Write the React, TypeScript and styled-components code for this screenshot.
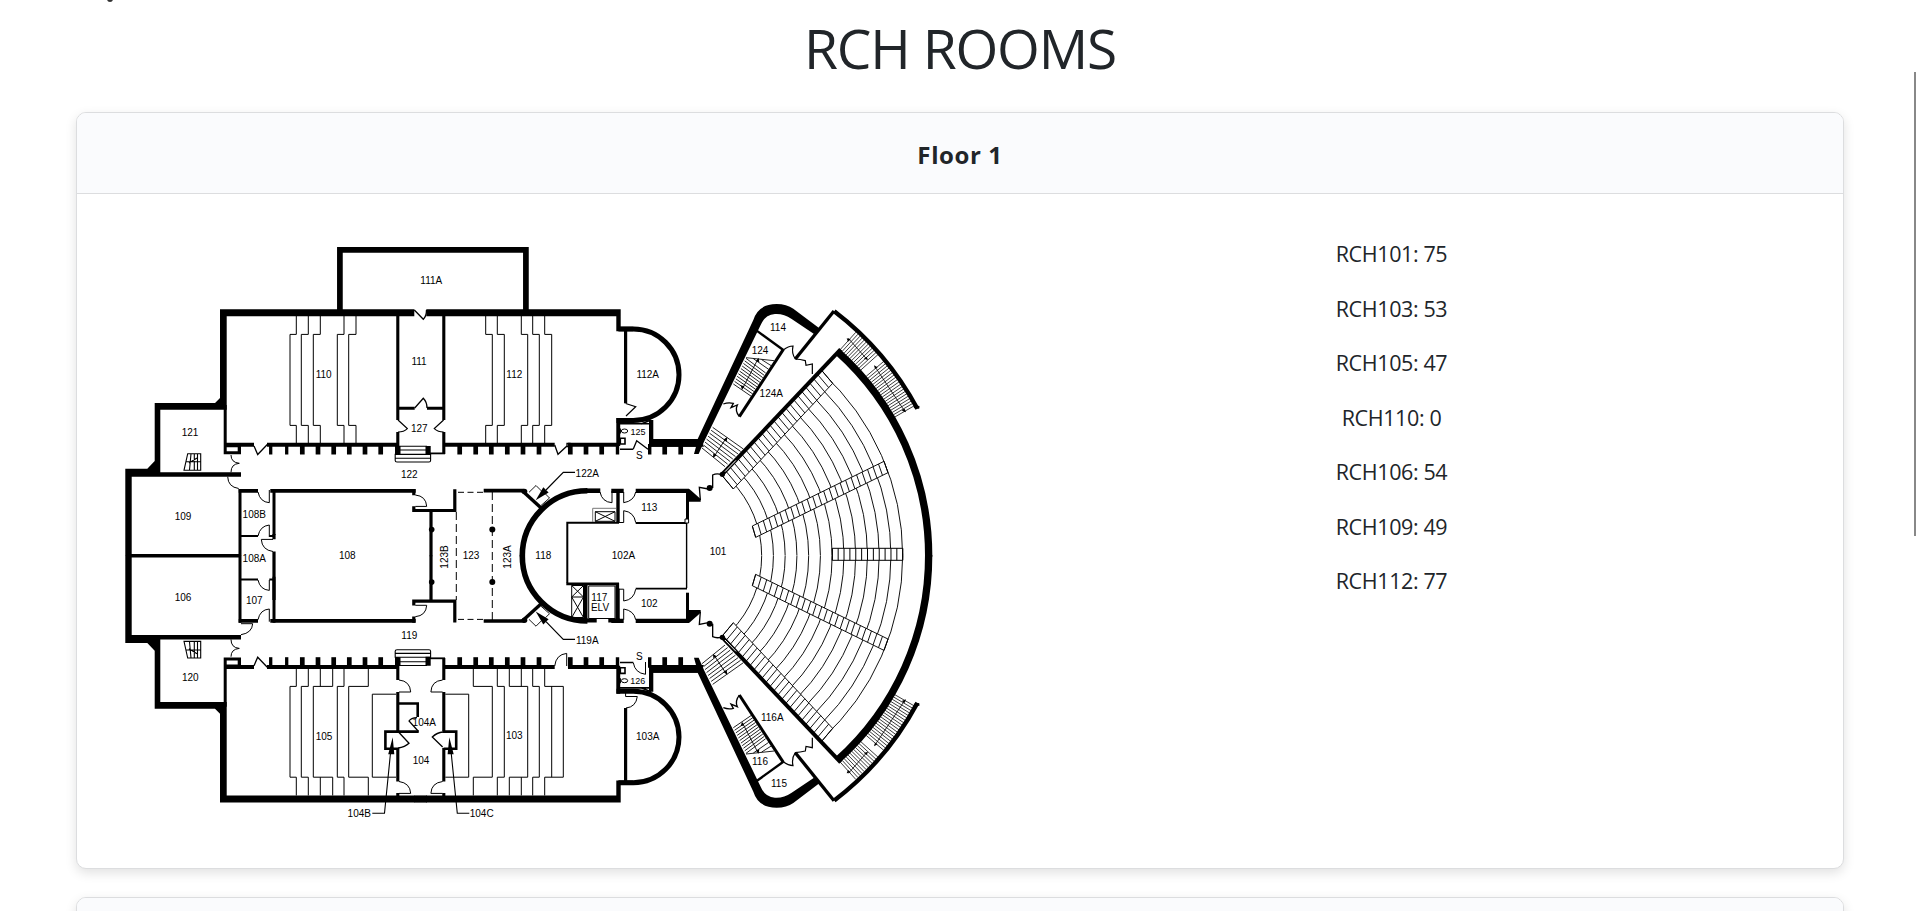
import React from 'react';
import styled, { createGlobalStyle } from 'styled-components';

const GlobalStyle = createGlobalStyle`
    body {
        margin: 0;
        height: 911px;
        overflow: hidden;
        background: #fff;
        color: #212529;
        font-family: 'Segoe UI', 'Open Sans', 'Noto Sans', sans-serif;
    }
`;

// Styling components
const Page = styled.div`
    position: relative;
    height: 911px;
    overflow: hidden;
    padding: 0 75px 0 76px;
    box-sizing: border-box;
`;

const NavRemnant = styled.span`
    position: absolute;
    left: 107px;
    top: -4px;
    width: 6px;
    height: 6px;
    border-radius: 50%;
    background: #333;
`;

const ScrollThumb = styled.div`
    position: absolute;
    left: 1914px;
    top: 72px;
    width: 2px;
    height: 464px;
    background: #888;
`;

const Title = styled.h1`
    margin: 0;
    height: 112px;
    line-height: 96px;
    font-size: 55px;
    font-weight: 400;
    letter-spacing: -1.2px;
    text-align: center;
`;

const Card = styled.section`
    box-sizing: border-box;
    height: 757px;
    margin-bottom: 28px;
    border: 1px solid #dcdddf;
    border-radius: 10px;
    overflow: hidden;
    background: #fff;
    box-shadow: 0 4px 12px rgba(0, 0, 0, 0.12);
`;

const CardHeader = styled.header`
    box-sizing: border-box;
    height: 81px;
    border-bottom: 1px solid #dcdddf;
    background: #fafbfd;
    line-height: 83px;
    font-size: 24px;
    font-weight: 700;
    letter-spacing: 0.6px;
    text-align: center;
`;

const CardBody = styled.div`
    display: grid;
    grid-template-columns: 859px 859px;
    padding-left: 26px;
`;

const FloorPlan = styled.svg`
    display: block;
    width: 859px;
    height: 674px;
`;

const RoomList = styled.ul`
    margin: 0;
    padding: 33px 0 0;
    list-style: none;
    text-align: center;
`;

const Room = styled.li`
    line-height: 54.5px;
    font-size: 21.5px;
    letter-spacing: -0.38px;
`;

const rooms = [
    { name: 'RCH101', seats: 75 },
    { name: 'RCH103', seats: 53 },
    { name: 'RCH105', seats: 47 },
    { name: 'RCH110', seats: 0 },
    { name: 'RCH106', seats: 54 },
    { name: 'RCH109', seats: 49 },
    { name: 'RCH112', seats: 77 },
];

const labels: [string, number, number][] = [
    ['111A', 431.3, 280.3], ['110', 323.7, 375], ['111', 419, 361.3], ['112', 514.3, 375],
    ['112A', 647.7, 375], ['127', 419.3, 428.3], ['121', 190, 432.3], ['122', 409.3, 474.3],
    ['109', 183, 516.7], ['108B', 254.3, 514.3], ['113', 649.3, 507.3], ['114', 778, 328],
    ['124', 760, 350.3], ['124A', 771.3, 393.3], ['102A', 623.5, 556], ['101', 718, 552],
    ['108A', 254.3, 559], ['106', 183, 597.7], ['107', 254.3, 600.7], ['108', 347.3, 555.7],
    ['119', 409.3, 635.7], ['120', 190.3, 678], ['105', 324, 736.3], ['104A', 424.3, 722.7],
    ['104', 421, 760.3], ['104B', 359.3, 813.3], ['123', 471, 555.7], ['118', 543.3, 555.7],
    ['117', 599.3, 597.3], ['ELV', 600, 607.6], ['102', 649.3, 604], ['119A', 587.3, 640.3],
    ['122A', 587.3, 473.3], ['103', 514.3, 736], ['103A', 647.7, 737], ['104C', 481.7, 813.3],
    ['116A', 772.3, 717.7], ['116', 760, 761.3], ['115', 779, 783.3], ['S', 639.3, 455.7],
    ['S', 639.3, 656.3],
];

const range = (n: number) => Array.from({ length: n }, (_, i) => i);

// Tiered rows: a is the x at the ends, b is the x in the middle
const tiers = (pairs: number[][], y: number[]) =>
    pairs.map(([a, b]) => `M${a} ${y[0]}V${y[1]}H${b}V${y[2]}H${a}V${y[3]}`).join('');

// Rungs between two edges, interpolated from the start pair to the end pair
const rungs = (n: number, a: number[], b: number[], c: number[], d: number[]) =>
    range(n + 1).map((i) => {
        const t = i / n;
        const mix = (p: number, q: number) => (p + (q - p) * t).toFixed(2);
        return `M${mix(a[0], c[0])} ${mix(a[1], c[1])}L${mix(b[0], d[0])} ${mix(b[1], d[1])}`;
    }).join('');

// Outline around a run of rungs
const strip = (a: number[], b: number[], c: number[], d: number[]) => `M${a}L${b}L${d}L${c}Z`;

// Auditorium is drawn around this centre
const CX = 134;
const CY = 797;
const polar = (r: number, deg: number) => {
    const rad = (deg * Math.PI) / 180;
    return `${(CX + r * Math.cos(rad)).toFixed(2)} ${(CY - r * Math.sin(rad)).toFixed(2)}`;
};

const radial = (n: number, from: number, to: number) =>
    range(n).map((i) => {
        const deg = from + ((to - from) * i) / (n - 1);
        return `M${polar(832, deg)}L${polar(902, deg)}`;
    }).join('');

const wallTicks = [
    [270.7, 3.3], [286.7, 3.3], [302.3, 4.7], [318, 4.7], [333.7, 4.7], [349.3, 4.7], [365, 4.7], [380.7, 4.7],
    [459.7, 4.7], [475.7, 4.7], [491.3, 4.7], [507.3, 4.7], [523, 4.7], [539, 4.7], [570.3, 4.7], [586, 4.7],
    [601.7, 4.7], [664.7, 4.7], [680.7, 4.7],
];

// The half of the building that repeats on both sides of the centre line
const MainHalf: React.FC = () => (
    <>
        {/* outer walls */}
        <path d="M220 309.3H414.3V316.3H226.7V409.7H160.3V472.3H241V476.7H131.7V556H125.3V468.7H147.3L154.7 461V403H215L220 398Z" fill="#000" stroke="none" />
        <path d="M426.3 309.3H620.7V326.7H633.3V331.3H616.3V316.3H426.3Z" fill="#000" stroke="none" />
        <path d="M223.7 405H226.7V442.7H254V446.7H241V454.3H223.7ZM226.7 447.2V451.2H237.7V447.2Z" fill="#000" fillRule="evenodd" stroke="none" />
        <path d="M267 444.7H399M445 444.7H554.7M568 444.7H618" strokeWidth="4" />
        {wallTicks.map(([x, w]) => <path key={x} d={`M${x} 444V454.5`} strokeWidth={w} />)}
        <path d="M397 444V454.5M617.5 444V454.5M649.7 444V454.5" strokeWidth="3.4" />
        <path d="M254 446L257.7 454.5L267.3 444.5" strokeWidth="1.3" />
        <path d="M231 455Q231 462.5 239.3 463.3Q231 464 231 472.3" />
        {/* small stairs */}
        <path d="M187.7 453.7H200.7V470.3H184ZM191 453.7L189.5 470M194.3 453.7V470M197.5 453.7V470M186 461.7H200.7M189 463L197 458" strokeWidth="1.1" />
        {/* entrance steps */}
        <path d="M395 446H400.5V454.5H395ZM425.5 446H430.7V455H425.5Z" fill="#000" stroke="none" />
        <path d="M399 446.2H427M399 450H427M395.2 454.4H430.6V460.5Q430.6 462 429 462H397Q395.2 462 395.2 460.5ZM395.2 458.3H430.6" strokeWidth="1.1" />
        <path d="M430 453.4H445" strokeWidth="1.8" />
        {/* half round room */}
        <path d="M618.4 329H633.3A45.7 45.7 0 0 1 633.3 420.4H616.5" strokeWidth="5" />
        <path d="M616.3 418H620.2V446H616.3ZM649 420H653.3V439H700L704 446.7H649Z" fill="#000" stroke="none" />
        <path d="M620 423.8H650M620 449.2H633.3M651 420L641 424" strokeWidth="1.6" />
        <path d="M620.3 438.3H625V444H620.3Z" strokeWidth="1.6" />
        <ellipse cx="624.5" cy="431" rx="3.2" ry="2" />
        <path d="M620.3 428.5V433.5" strokeWidth="1.3" />
        {/* centre block */}
        <path d="M238.7 490.8H258M270.3 490.8H415.7M483.7 490.7H524" strokeWidth="3.7" />
        <path d="M240 489V556M274 489V535" strokeWidth="3" />
        <path d="M258 492Q260 502 269.3 502.7V490" />
        <path d="M413.8 489V495.3M413.8 506.3V510.5H454.8V489.3" strokeWidth="3.2" />
        <path d="M415.3 495Q426 496 426.7 506.4H415.3" />
        <path d="M431 510V556.2" strokeWidth="3.2" />
        <circle cx="431.7" cy="529.6" r="2.8" fill="#000" stroke="none" />
        <circle cx="492.3" cy="529.6" r="3" fill="#000" stroke="none" />
        <path d="M458 492.3H483" strokeDasharray="6 3.5" />
        <path d="M522 490.5L542 508.8" strokeWidth="3.4" />
        <circle cx="524.5" cy="491.5" r="2.8" fill="#000" stroke="none" />
        <path d="M587.4 490.7A65.1 65.1 0 0 0 522.3 556.2" strokeWidth="5.6" />
        <path d="M529 492.3L536 485.5L541.5 491M549.5 498L541 505.5M549.5 498L545.5 494" strokeWidth="0.9" />
        <path d="M575 472.4H563.3L546 490" strokeWidth="1.2" />
        <path d="M535.7 500.3L543.3 487.3L548.6 492.4Z" fill="#000" stroke="none" />
        <path d="M611.3 490.8H623.7M635.7 490.8H689" strokeWidth="4.3" />
        <path d="M618 490V523" strokeWidth="3.4" />
        <path d="M623.7 492V502.7Q634 501 635.7 492M619 522.5H623.7V510.7Q634 512 635.7 522.5" />
        <path d="M635.7 523H687" strokeWidth="1.8" />
        <path d="M687.5 490V519" strokeWidth="3" />
    </>
);

// Theatre wing
const WingHalf: React.FC = () => (
    <g transform="translate(610 290) scale(0.33333)" strokeWidth="2.8">
        {range(13).map((i) => {
            const r = 321 + i * 35.25;
            return <path key={i} d={`M${polar(r, i === 12 ? 47.6 : 44.5)}A${r} ${r} 0 0 1 ${polar(r, 0)}`} />;
        })}
        <path d={strip([335, 555], [370, 597], [634, 240], [668, 280])} fill="#fff" />
        <path d={rungs(25, [335, 555], [370, 597], [634, 240], [668, 280])} />
        <path d={strip([427, 708], [437, 742], [822, 514], [834, 548])} fill="#fff" />
        <path d={rungs(24, [427, 708], [437, 742], [822, 514], [834, 548])} />
        {/* main curved walls */}
        <path d={`M${polar(822, 48.2)}A822 822 0 0 1 ${polar(822, -0.2)}`} strokeWidth="22" />
        <path d={`M${polar(910, 53.7)}A906 906 0 0 1 ${polar(903, 29.2)}`} strokeWidth="13" />
        <path d="M912 350L928 352" strokeWidth="8" />
        <path d="M335 555L692 178" strokeWidth="12" />
        <path d="M345 545L378 511" stroke="#fff" strokeWidth="3" />
        <path d="M556 207L672 63" strokeWidth="10" />
        <path d={radial(12, 48, 42)} strokeWidth="2.3" />
        <path d={radial(20, 40.3, 30)} strokeWidth="2.3" />
        <path d="M715 145L770 207M795 230L885 365" strokeWidth="2.4" />
        <path d="M710 145L722 148L714 155ZM774 210L762 206L770 200ZM792 226L803 232L795 237ZM888 367L875 362L884 356Z" fill="#000" stroke="none" />
        {/* rounded corner and diagonal wall */}
        <path d="M120 447H263L430 90Q445 42 500 42Q530 42 550 56L628 115L612 132L545 87Q520 70 495 72Q465 74 452 105L282 455L266 492H252L258 470H120Z" fill="#000" stroke="none" />
        <path d="M440 122L520 180" strokeWidth="7" />
        <path d="M520 178L388 380" strokeWidth="9" />
        <path d={rungs(10, [408, 205], [467, 249], [370, 282], [424, 319])} strokeWidth="2.6" />
        <path d="M408 203L492 212M430 206L476 238M455 209L485 228M398 295L445 205" strokeWidth="2.6" />
        <path d="M396 300L392 286L403 289ZM446 205L448 217L438 213Z" fill="#000" stroke="none" />
        <path d="M340 342Q355 336 370 340L363 353L382 345Q374 362 388 380" strokeWidth="4" />
        <path d="M520 180Q535 168 549 168Q544 190 556 207Q570 208 586 212L588 226L607 222V252" strokeWidth="3.6" />
        <path d={rungs(7, [308, 412], [400, 477], [276, 474], [345, 530])} strokeWidth="2.6" />
        <path d="M348 445L312 500" />
        <path d="M352 441L350 455L340 449ZM309 503L310 490L320 496Z" fill="#000" stroke="none" />
        {/* lobby doors */}
        <path d="M230 597H238L272 627V635H228Z" fill="#000" stroke="none" />
        <path d="M271 630L268 592L295 597M308 594V555Q320 549 335 554" strokeWidth="4" />
        <circle cx="299" cy="594" r="9" fill="#000" stroke="none" />
        <circle cx="337" cy="553" r="8" fill="#000" stroke="none" />
    </g>
);

const FloorOnePlan: React.FC = () => (
    <FloorPlan viewBox="103 194 859 674" fill="none" stroke="#000" strokeWidth="1">
        <MainHalf />
        <WingHalf />
        <g transform="matrix(1 0 0 -1 0 1111.7)">
            <MainHalf />
            <WingHalf />
        </g>

        {/* north side */}
        <path d="M339.9 312V249.8H525.9V312" strokeWidth="5.7" />
        <path d="M414.3 310L423.3 319.3Q426.5 316 426.5 310M414.7 408L423.3 398.3Q427 402 427 408" strokeWidth="1.3" />
        <path d="M399 408.2H414.7M427 408.2H443" strokeWidth="3" />
        <path d="M397.8 316V420M397.8 432V454M443.8 316V420M443.8 432V454" strokeWidth="3.1" />
        <path d="M398 420L407.3 428.6Q404 432 398 432M443.6 420L434.3 428.6Q438 432 443.6 432" strokeWidth="1.2" />
        <path d={tiers([[296.3, 290], [308.3, 301.3], [320.3, 313.3], [344, 337.3], [356, 348.7], [485.7, 492.3], [497.3, 504.3], [521.3, 527.7], [532.7, 539.3], [544.7, 551.7]], [316, 334.4, 425.4, 443])} />
        <path d="M554.7 445L558 454.3L567.5 445.5M567 443.5H570V446.5H567Z" strokeWidth="1.3" />
        <path d="M625.6 331V403.3" strokeWidth="3.2" />
        <path d="M625.7 403.5L635.7 406.7L626 416" strokeWidth="1.2" />
        <path d="M633.3 449L636.7 440.7L648 449.3" strokeWidth="1.3" />
        <path d="M227.7 476.7Q228 487 238.7 488.5" />
        <path d="M587 490.7H600.3" strokeWidth="4.6" />
        <path d="M600 492Q602 502 612 502.7V491" />
        <path d="M567.3 583V522.8H619" strokeWidth="2" />
        <path d="M592.7 522V508.3H616" stroke="#777" />
        <path d="M595.3 511.7H615V521.3H595.3ZM595.3 511.7L615 521.3M615 511.7L595.3 521.3" />

        {/* centre */}
        <path d="M131 555.8H240" strokeWidth="3.6" />
        <path d="M241 536H258M269.3 536H275M241 579.6H258M269.3 579.6H275" strokeWidth="2" />
        <path d="M274 534V539.3M274 551.5V600" strokeWidth="3.2" />
        <path d="M258 536Q260 526 269.3 525V537M273 539.4H261.3Q262 550 273 551.5M258 580Q260 589.6 269.3 590.4V580" />
        <path d="M456.3 512V600M492.3 492V620" strokeDasharray="8 4" />
        <path d="M686.6 523V588" strokeWidth="1.4" />
        <path d="M685 519H688.6V523H685Z" fill="#fff" />
        <path d="M832.3 548.3H902.7V560.3H832.3Z" fill="#fff" />
        <path d={rungs(12, [832.3, 548.3], [832.3, 560.3], [902.7, 548.3], [902.7, 560.3])} />

        {/* south side */}
        <path d="M414 799H427" strokeWidth="7.2" />
        <path d="M566.3 583.8H619" strokeWidth="2.8" />
        <path d="M585.7 583V621M617.3 583V621" strokeWidth="3.6" />
        <path d="M588.7 586H615V618.5H588.7Z" />
        <path d="M571.7 585.5H583.5V617.5H571.7ZM571.7 597H583.5M571.7 585.5L583.5 597L571.7 617.5M583.5 585.5L571.7 597L583.5 617.5" />
        <path d="M584 620.5H596.7M608.3 620.5H620" strokeWidth="4.2" />
        <path d="M252.7 623.7H241M252.7 623.7Q252 633 241 634.7" />
        <path d="M554.7 666Q556 654.5 566.7 653.4V666" />
        <path d="M633.3 662.7Q635 673 645.5 674.3V662" />
        <path d="M625.6 708V781" strokeWidth="3.2" />
        <path d="M625.6 693V696.5H637.3Q636 707 626 708" />
        <path d={tiers([[296.3, 290], [308.3, 301.3], [332.7, 313.3], [344, 337.3], [368.3, 348.7], [473.3, 492.3], [497.3, 504.3], [509.3, 527.7], [532.7, 539.3], [544.7, 563.3]], [669, 686.4, 777.2, 795.5])} />
        <path d="M320.3 669V686.4M320.3 777.2V795.5M521.3 669V686.4M521.3 777.2V795.5M551.7 686.4V777.2M396 694.2H372.3V777.2H396M445.3 694.2H468.7V777.2H445.3" />
        <path d="M397.8 658V680M397.8 692V731M397.8 748V781.5M397.8 793V796M443.8 658V680M443.8 692V731M443.8 748V781.5M443.8 793V796" strokeWidth="3.1" />
        <path d="M399 680Q410 681 410.7 692H399M442.6 680Q431.3 681 430.9 692H442.6M399 781.5Q410 783 410.7 793.4H399M442.6 781.5Q431.3 783 430.9 793.4H442.6" />
        <path d="M399 731.6H385.4V748.8H398M442.6 731.6H456.2V748.8H443.6M399 703.5H417.7V717M399 731.6H418.7" strokeWidth="2.6" />
        <path d="M399 732.5L409 743.3Q405 747 398 748M442.6 747L432.3 737Q437 732.5 443 732M417 717.7Q411 718 409 721L418.5 731.5" strokeWidth="1.3" />
        <path d="M372.3 813.3H384.5L390.5 753M469.3 813.3H457.3L451.2 753" strokeWidth="1.1" />
        <path d="M392.7 737.3L388.2 754.3H394.3ZM449.3 737.3L447.6 754.3H453.7Z" fill="#000" stroke="none" />

        <g fill="#000" stroke="none" fontFamily="'Liberation Sans', sans-serif" fontSize="10" textAnchor="middle">
            {labels.map(([text, x, y], index) => (
                <text key={index} x={x} y={y + 3.4}>{text}</text>
            ))}
            <text x="638" y="435.3" fontSize="9">125</text>
            <text x="637.7" y="683.6" fontSize="9">126</text>
            <text transform="translate(447.9 557) rotate(-90)">123B</text>
            <text transform="translate(510.9 557) rotate(-90)">123A</text>
        </g>
    </FloorPlan>
);

const App: React.FC = () => {
    return (
        <>
            <GlobalStyle />
            <Page>
                <NavRemnant />
                <Title>RCH ROOMS</Title>
                <Card>
                    <CardHeader>Floor 1</CardHeader>
                    <CardBody>
                        <FloorOnePlan />
                        <RoomList>
                            {rooms.map((room) => (
                                <Room key={room.name}>{room.name}: {room.seats}</Room>
                            ))}
                        </RoomList>
                    </CardBody>
                </Card>
                <Card>
                    <CardHeader />
                </Card>
                <ScrollThumb />
            </Page>
        </>
    );
};

export default App;
